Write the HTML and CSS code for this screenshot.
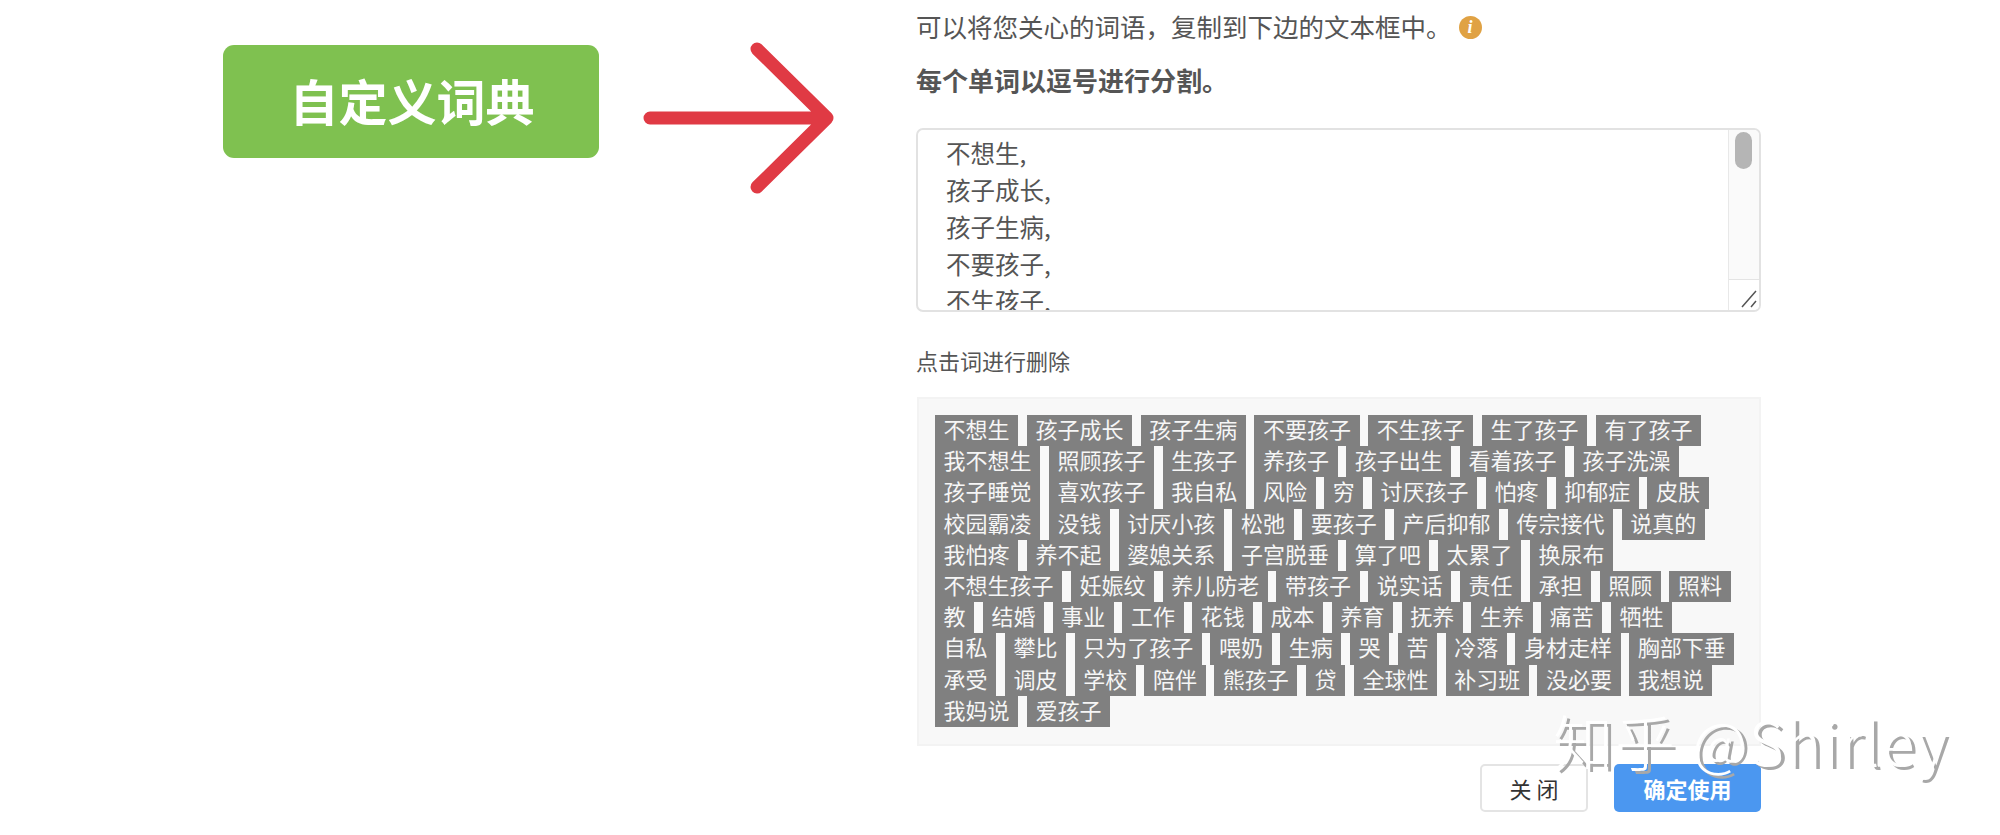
FILE: index.html
```html
<!DOCTYPE html>
<html lang="zh-CN">
<head>
<meta charset="utf-8">
<title>自定义词典</title>
<link rel="stylesheet" href="styles.css">
</head>
<body>
<div class="page">
  <div class="badge">自定义词典</div>
  <svg class="arrow" viewBox="0 0 192 152" width="192" height="152" aria-hidden="true">
    <path d="M7 76H184M114 7L184 76L114 145" fill="none" stroke="#e03a44" stroke-width="13" stroke-linecap="round" stroke-linejoin="round"/>
  </svg>
  <main class="panel">
    <p class="intro">可以将您关心的词语，复制到下边的文本框中。<span class="info">i</span></p>
    <p class="rule">每个单词以逗号进行分割。</p>
    <div class="editor">
      <div class="editor-text">
        <div>不想生,</div>
        <div>孩子成长,</div>
        <div>孩子生病,</div>
        <div>不要孩子,</div>
        <div>不生孩子,</div>
      </div>
      <div class="scrollbar">
        <div class="track"><div class="thumb"></div></div>
        <div class="resizer">
          <svg viewBox="0 0 30 30" width="30" height="30" aria-hidden="true">
            <path d="M14 27L28 11M23 27L28 21" fill="none" stroke="#555" stroke-width="1.5"/>
          </svg>
        </div>
      </div>
    </div>
    <p class="hint">点击词进行删除</p>
    <div class="words">
      <span class="word">不想生</span><span class="word">孩子成长</span><span class="word">孩子生病</span><span class="word">不要孩子</span><span class="word">不生孩子</span><span class="word">生了孩子</span><span class="word">有了孩子</span>
      <span class="word">我不想生</span><span class="word">照顾孩子</span><span class="word">生孩子</span><span class="word">养孩子</span><span class="word">孩子出生</span><span class="word">看着孩子</span><span class="word">孩子洗澡</span>
      <span class="word">孩子睡觉</span><span class="word">喜欢孩子</span><span class="word">我自私</span><span class="word">风险</span><span class="word">穷</span><span class="word">讨厌孩子</span><span class="word">怕疼</span><span class="word">抑郁症</span><span class="word">皮肤</span>
      <span class="word">校园霸凌</span><span class="word">没钱</span><span class="word">讨厌小孩</span><span class="word">松弛</span><span class="word">要孩子</span><span class="word">产后抑郁</span><span class="word">传宗接代</span><span class="word">说真的</span>
      <span class="word">我怕疼</span><span class="word">养不起</span><span class="word">婆媳关系</span><span class="word">子宫脱垂</span><span class="word">算了吧</span><span class="word">太累了</span><span class="word">换尿布</span>
      <span class="word">不想生孩子</span><span class="word">妊娠纹</span><span class="word">养儿防老</span><span class="word">带孩子</span><span class="word">说实话</span><span class="word">责任</span><span class="word">承担</span><span class="word">照顾</span><span class="word">照料</span>
      <span class="word">教</span><span class="word">结婚</span><span class="word">事业</span><span class="word">工作</span><span class="word">花钱</span><span class="word">成本</span><span class="word">养育</span><span class="word">抚养</span><span class="word">生养</span><span class="word">痛苦</span><span class="word">牺牲</span>
      <span class="word">自私</span><span class="word">攀比</span><span class="word">只为了孩子</span><span class="word">喂奶</span><span class="word">生病</span><span class="word">哭</span><span class="word">苦</span><span class="word">冷落</span><span class="word">身材走样</span><span class="word">胸部下垂</span>
      <span class="word">承受</span><span class="word">调皮</span><span class="word">学校</span><span class="word">陪伴</span><span class="word">熊孩子</span><span class="word">贷</span><span class="word">全球性</span><span class="word">补习班</span><span class="word">没必要</span><span class="word">我想说</span>
      <span class="word">我妈说</span><span class="word">爱孩子</span>
    </div>
    <div class="actions">
      <button class="btn btn-close" type="button">关 闭</button>
      <button class="btn btn-ok" type="button">确定使用</button>
    </div>
  </main>
  <div class="watermark">知乎 @Shirley</div>
</div>
</body>
</html>
```
FILE: styles.css
```css
* { box-sizing: border-box; }
html, body { margin: 0; padding: 0; background: #fff; }
body {
  width: 2000px;
  height: 835px;
  overflow: hidden;
  font-family: "Noto Sans CJK SC", "Liberation Sans", sans-serif;
}
.page {
  position: relative;
  display: flex;
  align-items: flex-start;
  width: 2000px;
  height: 835px;
  padding-left: 223px;
}
.badge {
  width: 376px;
  height: 113px;
  margin-top: 45px;
  padding-left: 2px;
  background: #7fc150;
  border-radius: 11px;
  color: #fff;
  font-size: 49px;
  font-weight: 700;
  line-height: 109px;
  text-align: center;
}
.arrow {
  flex: none;
  margin-top: 42px;
  margin-left: 44px;
}
.panel {
  width: 845px;
  margin-left: 81px;
  padding-top: 10px;
  color: #555;
}
.panel p { margin: 0; }
.intro {
  display: flex;
  align-items: flex-start;
  height: 37px;
  font-size: 25.5px;
  line-height: 32px;
}
.info {
  display: block;
  width: 23px;
  height: 23px;
  margin-top: 6px;
  margin-left: 7px;
  border-radius: 50%;
  background: #e0a244;
  color: #fff;
  font: italic 700 18px/23px "Liberation Serif", serif;
  text-align: center;
}
.rule {
  margin-top: 17px !important;
  height: 37px;
  font-size: 26px;
  font-weight: 700;
  line-height: 32px;
}
.editor {
  display: flex;
  height: 184px;
  margin-top: 27px;
  border: 2px solid #e2e2e2;
  border-radius: 7px;
  overflow: hidden;
  background: #fff;
}
.editor-text {
  flex: 1;
  padding: 4px 0 0 28px;
  overflow: hidden;
  font-size: 24.5px;
  line-height: 37px;
}
.scrollbar {
  display: flex;
  flex-direction: column;
  flex: none;
  width: 31px;
  border-left: 1.5px solid #e8e8e8;
  background: #fafafa;
}
.track { flex: 1; padding: 2px 7px 0 6px; }
.thumb {
  width: 17px;
  height: 37px;
  border-radius: 9px;
  background: #b5b5b5;
}
.resizer {
  height: 31px;
  border-top: 1.5px solid #e4e4e4;
  background: #fff;
}
.resizer svg { display: block; margin-left: -1px; }
.hint {
  height: 30px;
  margin-top: 36px !important;
  font-size: 22px;
  line-height: 24px;
}
.words {
  display: flex;
  flex-wrap: wrap;
  margin-top: 19px;
  margin-left: 1px;
  padding: 16px 10px 17px 16px;
  background: #f8f8f8;
  border: 2px solid #f3f3f3;
}
.word {
  height: 31.2px;
  margin-right: 8.6px;
  padding: 0 8.6px;
  background: #808080;
  color: #f6f6f6;
  font-size: 22px;
  line-height: 26px;
}
.actions {
  display: flex;
  justify-content: flex-end;
  gap: 26px;
  margin-top: 18px;
}
.btn {
  height: 48px;
  border-radius: 5px;
  font-family: inherit;
  font-size: 22px;
  line-height: 1;
  padding: 0;
}
.btn-close {
  width: 108px;
  border: 2px solid #e4e4e4;
  background: #fff;
  color: #333;
}
.btn-ok {
  width: 147px;
  border: 0;
  background: #4b97f0;
  color: #fff;
  font-weight: 700;
}
.watermark {
  position: absolute;
  left: 1553px;
  top: 698px;
  color: #fff;
  font-size: 60px;
  font-weight: 300;
  line-height: 84px;
  letter-spacing: 2px;
  white-space: nowrap;
  text-shadow: 4px 3px 0 #a8a8a8;
}
```
